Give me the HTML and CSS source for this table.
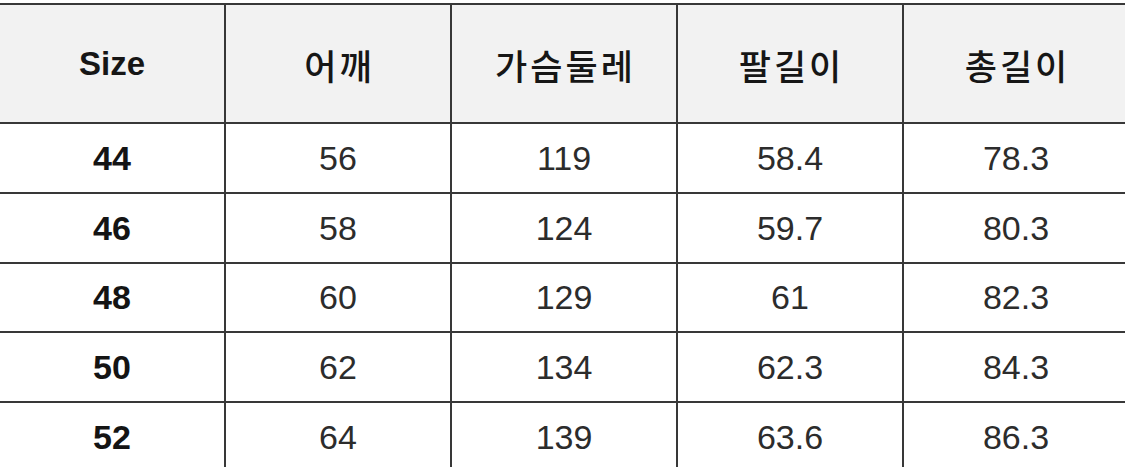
FILE: index.html
```html
<!DOCTYPE html>
<html lang="ko">
<head>
<meta charset="utf-8">
<title>Size chart</title>
<link rel="stylesheet" href="styles.css">
</head>
<body>
<div class="chart">
  <div class="cell head latin">Size</div>
  <div class="cell head ko">어깨</div>
  <div class="cell head ko">가슴둘레</div>
  <div class="cell head ko">팔길이</div>
  <div class="cell head ko">총길이</div>

  <div class="cell size">44</div>
  <div class="cell">56</div>
  <div class="cell">119</div>
  <div class="cell">58.4</div>
  <div class="cell">78.3</div>

  <div class="cell size">46</div>
  <div class="cell">58</div>
  <div class="cell">124</div>
  <div class="cell">59.7</div>
  <div class="cell">80.3</div>

  <div class="cell size">48</div>
  <div class="cell">60</div>
  <div class="cell">129</div>
  <div class="cell">61</div>
  <div class="cell">82.3</div>

  <div class="cell size">50</div>
  <div class="cell">62</div>
  <div class="cell">134</div>
  <div class="cell">62.3</div>
  <div class="cell">84.3</div>

  <div class="cell size">52</div>
  <div class="cell">64</div>
  <div class="cell">139</div>
  <div class="cell">63.6</div>
  <div class="cell">86.3</div>
</div>
</body>
</html>
```

FILE: styles.css
```css
html, body {
  margin: 0;
  padding: 0;
  background: #ffffff;
  overflow: hidden;
}

.chart {
  display: grid;
  grid-template-columns: repeat(5, 224px);
  grid-template-rows: 117px repeat(5, 67.75px);
  gap: 2px;
  padding: 2px;
  margin: 3px 0 0 -2px;
  width: max-content;
  background: #383838;
}

.cell {
  display: flex;
  align-items: center;
  justify-content: center;
  background: #ffffff;
  font-family: "Liberation Sans", Arial, sans-serif;
  font-size: 34px;
  color: #2c2c2c;
  padding-top: 1px;
}

.head {
  background: #f2f2f2;
  color: #161616;
}

.latin {
  font-weight: 700;
  font-size: 33px;
}

.ko {
  font-family: "Noto Sans CJK KR", "Noto Sans", sans-serif;
  font-weight: 500;
  font-size: 35px;
  letter-spacing: 3px;
  text-indent: 3px;
}

.size {
  font-weight: 700;
  font-size: 34px;
  color: #141414;
}
```
